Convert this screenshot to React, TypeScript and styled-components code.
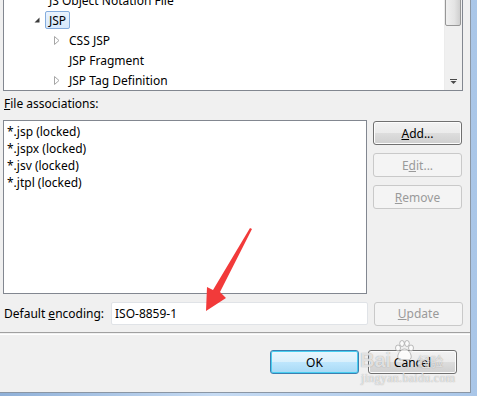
import React from 'react';
import styled, { createGlobalStyle } from 'styled-components';

const GlobalStyle = createGlobalStyle`
  html, body {
    margin: 0;
    padding: 0;
    background: #f0f0f0;
  }
  body {
    font-family: "Noto Sans", "Noto Sans CJK SC", sans-serif;
    font-size: 12px;
    color: #000;
  }
`;

const Frame = styled.div`
  position: relative;
  width: 477px;
  height: 396px;
  overflow: hidden;
  box-sizing: border-box;
  padding: 0 6px 3px 0;
  background: linear-gradient(90deg, #8fb0d8 0%, #c6dbf3 45%, #a9c6e8 100%);
`;

const Dialog = styled.div`
  box-sizing: border-box;
  width: 471px;
  height: 393px;
  background: #f0f0f0;
  border-right: 1px solid #8a96a4;
  border-bottom: 1px solid #8a96a4;
  padding-left: 3px;
  display: flex;
  flex-direction: column;
`;

const TreeBox = styled.div`
  box-sizing: border-box;
  width: 460px;
  height: 103px;
  margin-top: -12px;
  border: 1px solid #828790;
  background: #fff;
  display: flex;
`;

const TreeRows = styled.div`
  flex: 1;
  padding-top: 1px;
`;

const TreeRow = styled.div<{ $level: number }>`
  height: 20px;
  display: flex;
  align-items: center;
  padding-left: ${p => 30 + p.$level * 20}px;
`;

const Toggle = styled.span`
  width: 14px;
  height: 20px;
  display: flex;
  align-items: center;
  justify-content: flex-start;
  flex-shrink: 0;
`;

const NodeLabel = styled.span<{ $selected?: boolean }>`
  height: 18px;
  line-height: 18px;
  box-sizing: border-box;
  padding: 0 3px;
  margin-left: -3px;
  border-radius: 2px;
  border: 1px solid ${p => (p.$selected ? '#84acdd' : 'transparent')};
  background: ${p => (p.$selected ? 'linear-gradient(#eaf3fd, #d6e8fc)' : 'transparent')};
  white-space: nowrap;
`;

const ScrollBar = styled.div`
  width: 17px;
  display: flex;
  flex-direction: column;
  background: #f0f0f0;
  border-left: 1px solid #ececec;
`;

const Thumb = styled.div`
  box-sizing: border-box;
  height: 37px;
  margin: 0 1px 0 0;
  border: 1px solid #979797;
  border-radius: 2px;
  background: linear-gradient(90deg, #f0f0f0, #e4e4e4 60%, #cfcfcf);
`;

const ScrollArrow = styled.div`
  margin-top: auto;
  height: 17px;
  display: flex;
  align-items: center;
  justify-content: center;
`;

const FieldLabel = styled.div`
  margin: 5px 0 0 1px;
  height: 16px;
  line-height: 16px;
  white-space: nowrap;
`;

const MiddleRow = styled.div`
  margin-top: 8px;
  display: flex;
  gap: 6px;
  height: 174px;
`;

const ListBox = styled.div`
  box-sizing: border-box;
  width: 364px;
  border: 1px solid #828790;
  background: #fff;
  padding: 2px 0 0 3px;
`;

const ListItem = styled.div`
  height: 17px;
  line-height: 17px;
  white-space: nowrap;
`;

const ButtonColumn = styled.div`
  display: flex;
  flex-direction: column;
  gap: 8px;
  padding-top: 1px;
`;

type Variant = 'normal' | 'disabled' | 'default';

const Button = styled.div<{ $variant?: Variant }>`
  box-sizing: border-box;
  width: 89px;
  height: 24px;
  display: flex;
  align-items: center;
  justify-content: center;
  border-radius: 3px;
  border: 1px solid
    ${p => (p.$variant === 'disabled' ? '#c9c9c9' : p.$variant === 'default' ? '#3c7fb1' : '#707070')};
  color: ${p => (p.$variant === 'disabled' ? '#9a9a9a' : '#000')};
  background: ${p =>
    p.$variant === 'disabled'
      ? '#f4f4f4'
      : p.$variant === 'default'
      ? 'linear-gradient(#eaf6fd 0%, #d9f0fc 50%, #bee6fd 51%, #a7d9f5 100%)'
      : 'linear-gradient(#f2f2f2 0%, #ebebeb 50%, #dddddd 51%, #cfcfcf 100%)'};
  box-shadow: ${p =>
    p.$variant === 'disabled'
      ? 'none'
      : p.$variant === 'default'
      ? 'inset 0 0 0 1px #48cef0'
      : 'inset 0 0 0 1px #fcfcfc'};
  white-space: nowrap;
`;

const EncodingRow = styled.div`
  margin-top: 8px;
  height: 23px;
  display: flex;
  align-items: center;
`;

const EncodingLabel = styled.div`
  width: 107px;
  padding-left: 1px;
  white-space: nowrap;
`;

const TextInput = styled.div`
  box-sizing: border-box;
  width: 257px;
  height: 23px;
  border: 1px solid #e0e3e7;
  border-radius: 2px;
  background: #fff;
  padding-left: 3px;
  line-height: 21px;
  margin-right: 6px;
`;

const Separator = styled.div`
  margin: 7px 0 0 -3px;
  height: 1px;
  border-top: 1px solid #a0a0a0;
  border-bottom: 1px solid #ffffff;
`;

const Footer = styled.div`
  margin-top: 15px;
  display: flex;
  justify-content: flex-end;
  gap: 9px;
  padding-right: 13px;
`;

const Arrow = styled.svg`
  position: absolute;
  left: 0;
  top: 0;
  pointer-events: none;
`;

const Watermark = styled.div`
  position: absolute;
  left: 360px;
  top: 338px;
  width: 96px;
  height: 52px;
  pointer-events: none;
  color: rgba(255, 255, 255, 0.72);
  text-shadow: 0 0 1px rgba(110, 110, 110, 0.75);
`;

const WmBrand = styled.div`
  display: flex;
  align-items: flex-end;
  gap: 1px;
  height: 34px;
  font-family: "Liberation Sans", sans-serif;
  font-weight: bold;
  font-size: 20px;
  line-height: 24px;
`;

const WmCjk = styled.span`
  font-family: "Noto Sans CJK SC", sans-serif;
  font-size: 13px;
  font-weight: normal;
  line-height: 22px;
`;

const WmUrl = styled.div`
  font-family: "Liberation Serif", serif;
  font-size: 12px;
  line-height: 12px;
  letter-spacing: 0.3px;
  padding-left: 1px;
`;

const ExpandedIcon = () => (
  <svg width="6" height="6" viewBox="0 0 6 6">
    <polygon points="5.5,0.5 5.5,5.5 0.5,5.5" fill="#3c3c3c" />
  </svg>
);

const CollapsedIcon = () => (
  <svg width="6" height="9" viewBox="0 0 6 9">
    <polygon points="0.5,0.5 5,4.5 0.5,8.5" fill="#fff" stroke="#a6a6a6" strokeWidth="1" />
  </svg>
);

const treeItems: { label: string; level: number; toggle?: 'open' | 'closed'; selected?: boolean }[] = [
  { label: 'JS Object Notation File', level: 0 },
  { label: 'JSP', level: 0, toggle: 'open', selected: true },
  { label: 'CSS JSP', level: 1, toggle: 'closed' },
  { label: 'JSP Fragment', level: 1 },
  { label: 'JSP Tag Definition', level: 1, toggle: 'closed' },
];

const associations = ['*.jsp (locked)', '*.jspx (locked)', '*.jsv (locked)', '*.jtpl (locked)'];

export default function App() {
  return (
    <>
      <GlobalStyle />
      <Frame>
        <Dialog>
          <TreeBox>
            <TreeRows>
              {treeItems.map(item => (
                <TreeRow key={item.label} $level={item.level}>
                  <Toggle>
                    {item.toggle === 'open' && <ExpandedIcon />}
                    {item.toggle === 'closed' && <CollapsedIcon />}
                  </Toggle>
                  <NodeLabel $selected={item.selected}>{item.label}</NodeLabel>
                </TreeRow>
              ))}
            </TreeRows>
            <ScrollBar>
              <Thumb />
              <ScrollArrow>
                <svg width="7" height="5" viewBox="0 0 7 5">
                  <rect x="0" y="0" width="7" height="1" fill="#4a4a4a" />
                  <polygon points="0.5,2 6.5,2 3.5,5" fill="#4a4a4a" />
                </svg>
              </ScrollArrow>
            </ScrollBar>
          </TreeBox>

          <FieldLabel>
            <u>F</u>ile associations:
          </FieldLabel>

          <MiddleRow>
            <ListBox>
              {associations.map(a => (
                <ListItem key={a}>{a}</ListItem>
              ))}
            </ListBox>
            <ButtonColumn>
              <Button>
                <u>A</u>dd...
              </Button>
              <Button $variant="disabled">
                E<u>d</u>it...
              </Button>
              <Button $variant="disabled">
                <u>R</u>emove
              </Button>
            </ButtonColumn>
          </MiddleRow>

          <EncodingRow>
            <EncodingLabel>
              Default <u>e</u>ncoding:
            </EncodingLabel>
            <TextInput>ISO-8859-1</TextInput>
            <Button $variant="disabled">
              <u>U</u>pdate
            </Button>
          </EncodingRow>

          <Separator />

          <Footer>
            <Button $variant="default">OK</Button>
            <Button>Cancel</Button>
          </Footer>
        </Dialog>

        <Arrow width="477" height="396" viewBox="0 0 477 396">
          <polygon
            points="252,229 220,292 226,298 206,311 207,287 213,290 250,228"
            fill="#f23a3a"
          />
        </Arrow>

        <Watermark>
          <WmBrand>
            <span>Bai</span>
            <svg width="24" height="22" viewBox="0 0 22 22" style={{ marginBottom: 10 }}>
              <g fill="rgba(255,255,255,0.75)" stroke="rgba(130,130,130,0.65)" strokeWidth="0.8">
                <ellipse cx="5" cy="8" rx="2.5" ry="3" />
                <ellipse cx="9" cy="3.5" rx="2.3" ry="3" />
                <ellipse cx="14" cy="3.5" rx="2.3" ry="3" />
                <ellipse cx="18" cy="8" rx="2.5" ry="3" />
                <path d="M11.5 9 C7 9 4 15 5 18 C6 21 9 19.5 11.5 19.5 C14 19.5 17 21 18 18 C19 15 16 9 11.5 9 Z" />
              </g>
            </svg>
            <WmCjk>经验</WmCjk>
          </WmBrand>
          <WmUrl>jingyan.baidu.com</WmUrl>
        </Watermark>
      </Frame>
    </>
  );
}
